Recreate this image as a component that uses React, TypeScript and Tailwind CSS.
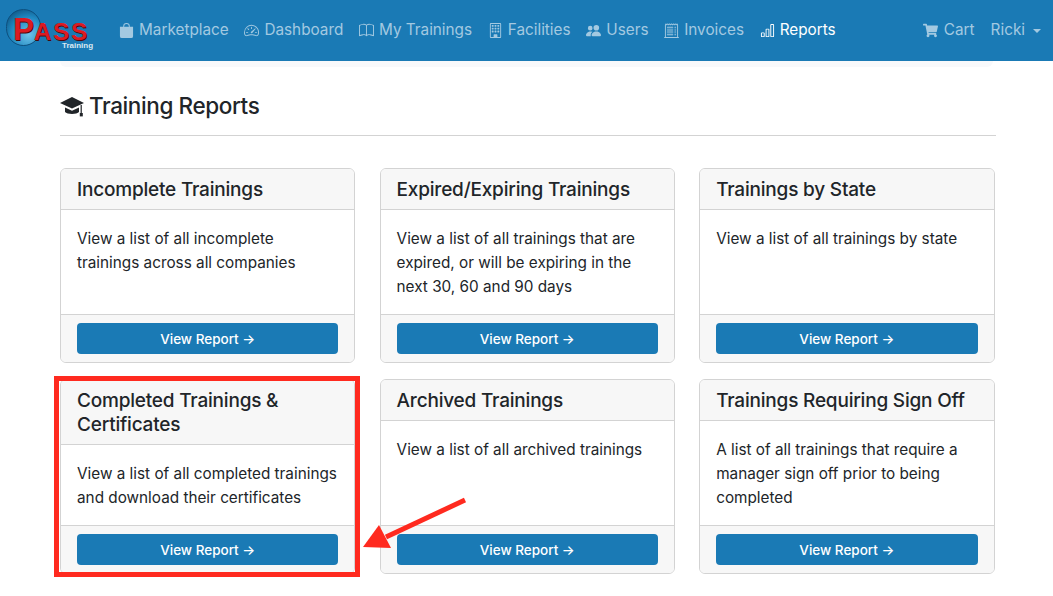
import { BsBagFill, BsSpeedometer2, BsBook, BsBuilding, BsPeopleFill, BsReceiptCutoff, BsBarChart } from "react-icons/bs";
import { FaShoppingCart } from "react-icons/fa";
import type { IconType } from "react-icons";

const navItems: { label: string; icon: IconType; active?: boolean }[] = [
  { label: "Marketplace", icon: BsBagFill },
  { label: "Dashboard", icon: BsSpeedometer2 },
  { label: "My Trainings", icon: BsBook },
  { label: "Facilities", icon: BsBuilding },
  { label: "Users", icon: BsPeopleFill },
  { label: "Invoices", icon: BsReceiptCutoff },
  { label: "Reports", icon: BsBarChart, active: true },
];

const reports = [
  { title: ["Incomplete Trainings"], text: ["View a list of all incomplete", "trainings across all companies"] },
  { title: ["Expired/Expiring Trainings"], text: ["View a list of all trainings that are", "expired, or will be expiring in the", "next 30, 60 and 90 days"] },
  { title: ["Trainings by State"], text: ["View a list of all trainings by state"] },
  { title: ["Completed Trainings &", "Certificates"], text: ["View a list of all completed trainings", "and download their certificates"], marked: true },
  { title: ["Archived Trainings"], text: ["View a list of all archived trainings"] },
  { title: ["Trainings Requiring Sign Off"], text: ["A list of all trainings that require a", "manager sign off prior to being", "completed"] },
];

function Logo() {
  return (
    <div className="relative w-[88px] h-[50px] shrink-0">
      <div className="absolute left-0 top-[3px] w-[35px] h-[37px] rounded-full border border-[#0d4f7e] bg-[radial-gradient(circle_at_65%_70%,#6fc3ea,#1d86bf_55%,#0b3f66)]" />
      <div className="absolute left-[7px] top-[8px] whitespace-nowrap text-[#dc1a22] font-bold leading-none font-['Liberation_Sans',sans-serif] [text-shadow:1px_1px_0_#4a070a]">
        <span className="text-[31px]">P</span>
        <span className="text-[24px] tracking-[2px]">ASS</span>
      </div>
      <div className="absolute left-[56px] top-[36px] text-[8px] leading-none font-bold text-[#dbe9f3] font-['Liberation_Sans',sans-serif]">Training</div>
    </div>
  );
}

function CapIcon() {
  return (
    <svg width="24" height="24" viewBox="0 0 24 24" fill="currentColor">
      <path d="M12 3 L24 9 L12 14.5 L0 9Z" />
      <path d="M5 13.5 L12 16.8 L19 13.5 V18 C17 20.6 7 20.6 5 18Z" />
      <rect x="20.6" y="11" width="1.2" height="8" />
      <rect x="19.8" y="19" width="3" height="3.4" />
    </svg>
  );
}

function Navbar() {
  return (
    <nav className="h-[61px] bg-[#1a7ab5] flex items-center pl-[6px] pr-[12px] text-[15.3px] text-[#a3c9e1]">
      <Logo />
      <ul className="flex items-center ml-[25px] gap-[15.7px]">
        {navItems.map(({ label, icon: Icon, active }) => (
          <li key={label} className={`flex items-center gap-[5px] ${active ? "text-white" : ""}`}>
            <Icon size={15} />
            {label}
          </li>
        ))}
      </ul>
      <div className="ml-auto flex items-center gap-[16px]">
        <span className="flex items-center gap-[6px]">
          <FaShoppingCart size={15} />
          Cart
        </span>
        <span className="flex items-center gap-[8px]">
          Ricki
          <span className="w-0 h-0 border-x-[4px] border-x-transparent border-t-[4px] border-t-[#a3c9e1]" />
        </span>
      </div>
    </nav>
  );
}

function ReportCard({ title, text, marked }: { title: string[]; text: string[]; marked?: boolean }) {
  return (
    <div className="relative flex flex-col border border-[#d3d3d3] rounded-[6px] bg-white">
      <div className="bg-[#f7f7f7] border-b border-[#d3d3d3] rounded-t-[5px] px-[16px] pt-[9px] pb-[7px] text-[19px] tracking-[-0.2px] leading-[24px] font-medium text-[#212529]">
        {title.map((line) => (
          <div key={line}>{line}</div>
        ))}
      </div>
      <div className="flex-1 px-[16px] pt-[17px] pb-[15px] text-[15.3px] leading-[24px] text-[#212529]">
        {text.map((line) => (
          <div key={line}>{line}</div>
        ))}
      </div>
      <div className="bg-[#f7f7f7] border-t border-[#d3d3d3] rounded-b-[5px] px-[16px] py-[8px]">
        <button className="w-full h-[31px] pt-[2px] rounded-[4px] bg-[#1a7ab5] text-white text-[13.5px] font-medium">View Report →</button>
      </div>
      {marked && <div className="absolute -left-[7px] -top-[4px] -right-[6px] -bottom-[4px] border-[5px] border-[#ff2a1f]" />}
    </div>
  );
}

export default function App() {
  return (
    <div className="relative w-[1053px] h-[596px] overflow-hidden bg-white font-['Inter',sans-serif]">
      <Navbar />
      <div className="h-[6px] mx-[60px] bg-[#f8f9fb] rounded-b-[6px]" />
      <main className="pl-[60px] pr-[57px] pt-[15px]">
        <h1 className="flex items-center gap-[5px] h-[48px] pb-[5px] border-b border-[#d3d3d3] mb-[32px] text-[22.5px] tracking-[-0.4px] font-medium text-[#212529] box-content">
          <CapIcon />
          Training Reports
        </h1>
        <div className="grid grid-cols-[295.4px_295.4px_295.4px] gap-x-[24.2px] gap-y-[16px]">
          {reports.map((report) => (
            <ReportCard key={report.title[0]} {...report} />
          ))}
        </div>
      </main>
      <svg className="absolute left-[362px] top-[497px]" width="106" height="53" viewBox="0 0 106 53">
        <path d="M103 3 L24 40" stroke="#ff2a1f" strokeWidth="5" fill="none" />
        <path d="M1 50 L17 28 L29 51 Z" fill="#ff2a1f" />
      </svg>
    </div>
  );
}
